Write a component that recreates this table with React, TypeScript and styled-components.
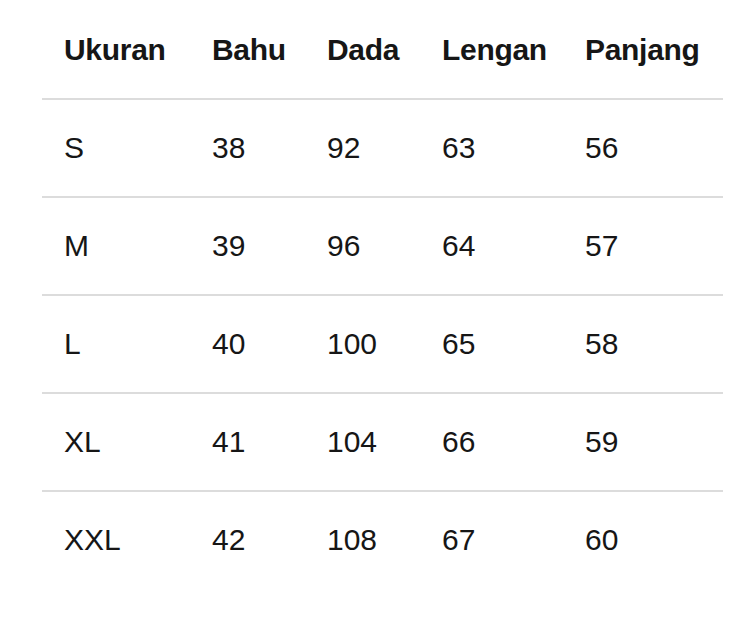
import React from 'react';
import styled, { createGlobalStyle } from 'styled-components';

const GlobalStyle = createGlobalStyle`
  body {
    margin: 0;
    background: #ffffff;
    font-family: "Liberation Sans", Arial, sans-serif;
    color: #161616;
  }
`;

const Page = styled.div`
  padding: 2px 30px 0 42px;
  width: 753px;
  box-sizing: border-box;
`;

const Row = styled.div<{ $last?: boolean }>`
  display: grid;
  grid-template-columns: 148px 115px 115px 143px 1fr;
  height: 96px;
  border-bottom: ${({ $last }) => ($last ? 'none' : '2px solid #dcdcdc')};
`;

const Cell = styled.div<{ $head?: boolean }>`
  display: flex;
  align-items: center;
  padding-left: 22px;
  font-size: 30px;
  font-weight: ${({ $head }) => ($head ? 700 : 400)};
  letter-spacing: ${({ $head }) => ($head ? '-0.3px' : '0')};
`;

const headers = ['Ukuran', 'Bahu', 'Dada', 'Lengan', 'Panjang'];

const sizes = [
  ['S', '38', '92', '63', '56'],
  ['M', '39', '96', '64', '57'],
  ['L', '40', '100', '65', '58'],
  ['XL', '41', '104', '66', '59'],
  ['XXL', '42', '108', '67', '60'],
];

function App(): React.ReactElement {
  return (
    <>
      <GlobalStyle />
      <Page>
        <Row>
          {headers.map((h) => (
            <Cell key={h} $head>
              {h}
            </Cell>
          ))}
        </Row>
        {sizes.map((row, i) => (
          <Row key={row[0]} $last={i === sizes.length - 1}>
            {row.map((v, j) => (
              <Cell key={j}>{v}</Cell>
            ))}
          </Row>
        ))}
      </Page>
    </>
  );
}

export default App;
